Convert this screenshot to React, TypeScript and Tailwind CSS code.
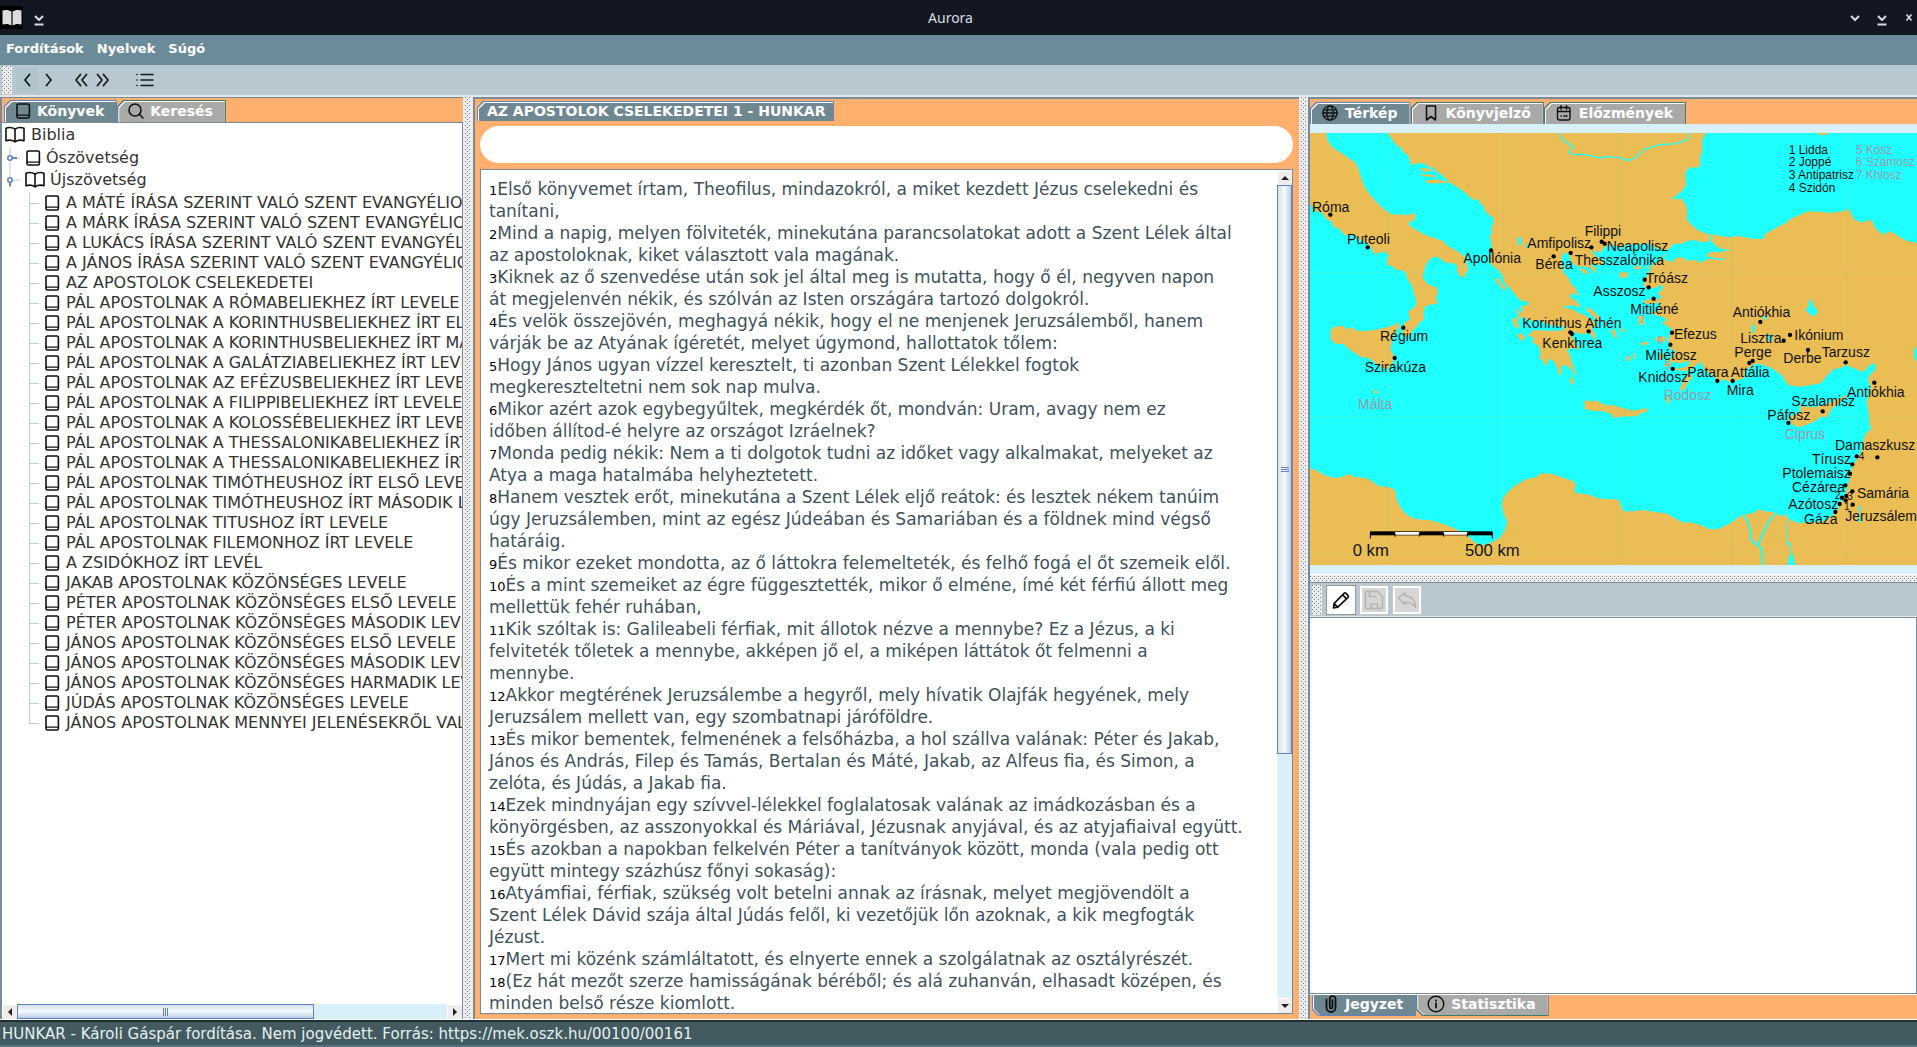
import React from "react";

/* ---------- icons ---------- */
type IconProps = { className?: string };
const base = {
  fill: "none",
  stroke: "currentColor",
  strokeWidth: 1.6,
  strokeLinecap: "round" as const,
  strokeLinejoin: "round" as const,
};

const Book = ({ className = "h-4 w-4" }: IconProps) => (
  <svg viewBox="0 0 16 16" className={className} {...base} aria-hidden="true">
    <rect x="2" y="1" width="12.4" height="14" rx="1.4" />
    <path d="M2 12.2h12.4" strokeWidth="1.2" />
  </svg>
);
const OpenBook = ({ className = "h-[18px] w-5" }: IconProps) => (
  <svg viewBox="0 0 20 18" className={className} {...base} aria-hidden="true">
    <path d="M1 2.2C4 1.2 7.500 1.600 10 3c2.500-1.400 6-1.800 9-.8v12.600c-3-1-6.500-.6-9 .9-2.500-1.500-6-1.900-9-.9z" />
    <path d="M10 3v12.500" />
  </svg>
);
const Search = () => (
  <svg viewBox="0 0 16 16" className="h-4 w-4" {...base} aria-hidden="true">
    <circle cx="7" cy="7" r="6" />
    <path d="M11.300 11.300 15 15" />
  </svg>
);
const Globe = () => (
  <svg viewBox="0 0 16 16" className="h-4 w-[18px]" {...base} strokeWidth="1.3" aria-hidden="true">
    <circle cx="8" cy="8" r="7.200" />
    <ellipse cx="8" cy="8" rx="3.200" ry="7.200" />
    <path d="M1 8h14M2.200 4.800h11.600M2.200 11.200h11.600" />
  </svg>
);
const Bookmark = () => (
  <svg viewBox="0 0 16 16" className="h-4 w-[18px]" {...base} aria-hidden="true">
    <path d="M3.500 1h9v14L8 11.500 3.500 15z" />
  </svg>
);
const Calendar = () => (
  <svg viewBox="0 0 16 16" className="h-4 w-[18px]" {...base} strokeWidth="1.400" aria-hidden="true">
    <rect x="1.500" y="2.500" width="12.500" height="12.500" rx="2" />
    <path d="M1.500 6.500H14M5 .6v3.600M10.500 .6v3.600M5 11h.4M8 11h3" />
  </svg>
);
const Clip = () => (
  <svg viewBox="0 0 16 18" className="h-[18px] w-4" {...base} strokeWidth="1.800" aria-hidden="true">
    <path d="M3.500 4.500v8a4.500 4.500 0 0 0 9 0V4a2.800 2.800 0 0 0-5.700 0v8a1.300 1.300 0 0 0 2.600 0V5" />
  </svg>
);
const Info = () => (
  <svg viewBox="0 0 18 18" className="h-[18px] w-[18px]" {...base} strokeWidth="1.400" aria-hidden="true">
    <circle cx="9" cy="9" r="7.800" />
    <path d="M9 8.200v4.300M9 5.400v.3" strokeWidth="1.800" />
  </svg>
);
const Pencil = () => (
  <svg viewBox="0 0 20 20" className="h-5 w-5" {...base} strokeWidth="1.700" aria-hidden="true">
    <path d="M3 13.600 13 3.300q1-.9 2 0l2 2q.9 1 0 2L6.800 17.200 2.500 17.800zM11.600 4.800l4 4M3 13.600l3.800 3.600" />
  </svg>
);
const Save = () => (
  <svg viewBox="0 0 20 20" className="h-5 w-5" {...base} aria-hidden="true">
    <path d="M1.500 3q0-1.500 1.500-1.500h10.500l5 5V17q0 1.500-1.500 1.500H3Q1.500 18.500 1.500 17zM5.500 1.500v5H12M7 18.500v-4.500h6.500v4.500" />
  </svg>
);
const Undo = () => (
  <svg viewBox="0 0 20 20" className="h-5 w-5" {...base} aria-hidden="true">
    <path d="M1.500 8 8 2.500v3.300c6.500.4 10.200 4 10.500 11.700-2.300-4-5.500-5.300-10.500-5.300v2.300z" />
  </svg>
);
const Chevrons = ({ d, w }: { d: string; w: string }) => (
  <svg viewBox={w} className="h-4 w-auto" {...base} strokeWidth="1.800" aria-hidden="true">
    <path d={d} />
  </svg>
);
const List = () => (
  <svg viewBox="0 0 18 14" className="h-[14px] w-[18px]" {...base} aria-hidden="true">
    <path d="M5 1.500h12M5 7h12M5 12.500h12M1 1.500h.2M1 7h.2M1 12.500h.2" />
  </svg>
);
const WinMin = () => (
  <svg viewBox="0 0 12 12" className="h-3 w-3" {...base} strokeWidth="2" strokeLinecap="butt" aria-hidden="true">
    <path d="M2 2l4 4 4-4M1.500 10.500h9" />
  </svg>
);

/* ---------- shared parts ---------- */
const DOTS =
  "bg-[image:conic-gradient(from_270deg_at_1px_1px,#6f7d8a_90deg,transparent_0),conic-gradient(from_270deg_at_1px_1px,#6f7d8a_90deg,transparent_0)] bg-[size:4px_4px] bg-[position:0_0,2px_2px]";

function Tab({
  icon,
  label,
  active = false,
  bottom = false,
}: {
  icon?: React.ReactNode;
  label: string;
  active?: boolean;
  bottom?: boolean;
}) {
  const clip = bottom
    ? "[clip-path:polygon(0_0,100%_0,100%_100%,6px_100%,0_calc(100%-6px))]"
    : "[clip-path:polygon(6px_0,100%_0,100%_100%,0_100%,0_6px)]";
  return (
    <button
      type="button"
      role="tab"
      aria-selected={active}
      className={`flex ${clip} ${bottom ? "px-px pb-px" : "px-px pt-px"} ${active ? "bg-[#6382bf]" : "bg-[#3f7a70]"}`}
    >
      <span className={`flex ${clip} ${bottom ? "pl-px" : "pl-px pt-px"} bg-white`}>
        <span
          className={`flex items-center gap-1.5 ${clip} ${icon ? "h-5 pl-[9px] pr-3" : "h-[18px] px-2"} ${active ? "bg-[#6f8791]" : "bg-[#a9aaa8]"} pb-0.5 text-sm leading-4 font-bold text-white`}
        >
          {icon && <span className="text-[#111]">{icon}</span>}
          {label}
        </span>
      </span>
    </button>
  );
}

const Arrow = ({ points }: { points: string }) => (
  <svg viewBox="0 0 8 8" className="h-2 w-2" aria-hidden="true">
    <polygon points={points} fill="#222" />
  </svg>
);

/* ---------- book tree ---------- */
const books = [
  "A MÁTÉ ÍRÁSA SZERINT VALÓ SZENT EVANGYÉLIOM",
  "A MÁRK ÍRÁSA SZERINT VALÓ SZENT EVANGYÉLIOM",
  "A LUKÁCS ÍRÁSA SZERINT VALÓ SZENT EVANGYÉLIOM",
  "A JÁNOS ÍRÁSA SZERINT VALÓ SZENT EVANGYÉLIOM",
  "AZ APOSTOLOK CSELEKEDETEI",
  "PÁL APOSTOLNAK A RÓMABELIEKHEZ ÍRT LEVELE",
  "PÁL APOSTOLNAK A KORINTHUSBELIEKHEZ ÍRT ELSŐ LEVELE",
  "PÁL APOSTOLNAK A KORINTHUSBELIEKHEZ ÍRT MÁSODIK LEVELE",
  "PÁL APOSTOLNAK A GALÁTZIABELIEKHEZ ÍRT LEVELE",
  "PÁL APOSTOLNAK AZ EFÉZUSBELIEKHEZ ÍRT LEVELE",
  "PÁL APOSTOLNAK A FILIPPIBELIEKHEZ ÍRT LEVELE",
  "PÁL APOSTOLNAK A KOLOSSÉBELIEKHEZ ÍRT LEVELE",
  "PÁL APOSTOLNAK A THESSALONIKABELIEKHEZ ÍRT ELSŐ LEVELE",
  "PÁL APOSTOLNAK A THESSALONIKABELIEKHEZ ÍRT MÁSODIK LEVELE",
  "PÁL APOSTOLNAK TIMÓTHEUSHOZ ÍRT ELSŐ LEVELE",
  "PÁL APOSTOLNAK TIMÓTHEUSHOZ ÍRT MÁSODIK LEVELE",
  "PÁL APOSTOLNAK TITUSHOZ ÍRT LEVELE",
  "PÁL APOSTOLNAK FILEMONHOZ ÍRT LEVELE",
  "A ZSIDÓKHOZ ÍRT LEVÉL",
  "JAKAB APOSTOLNAK KÖZÖNSÉGES LEVELE",
  "PÉTER APOSTOLNAK KÖZÖNSÉGES ELSŐ LEVELE",
  "PÉTER APOSTOLNAK KÖZÖNSÉGES MÁSODIK LEVELE",
  "JÁNOS APOSTOLNAK KÖZÖNSÉGES ELSŐ LEVELE",
  "JÁNOS APOSTOLNAK KÖZÖNSÉGES MÁSODIK LEVELE",
  "JÁNOS APOSTOLNAK KÖZÖNSÉGES HARMADIK LEVELE",
  "JÚDÁS APOSTOLNAK KÖZÖNSÉGES LEVELE",
  "JÁNOS APOSTOLNAK MENNYEI JELENÉSEKRŐL VALÓ KÖNYVE",
];

function Handle({ open }: { open: boolean }) {
  return (
    <svg viewBox="0 0 18 22" className="h-[22px] w-[18px]" fill="none" aria-hidden="true">
      <path d={open ? "M8 0v8M11 11h7" : "M8 0v22M11 11h7"} stroke="#b8cfe5" />
      <circle cx="8" cy="11" r="2.200" stroke="#6382bf" strokeWidth="1.600" fill="#fff" />
      <path d={open ? "M8 13v4.500" : "M10 11h5"} stroke="#6382bf" strokeWidth="2" />
    </svg>
  );
}

function BookTree() {
  return (
    <div className="min-h-0 flex-1 overflow-hidden whitespace-nowrap text-base leading-5 text-[#333]">
      <div className="flex h-6 items-center gap-1.5 pl-[3px]">
        <span className="text-[#111]"><OpenBook /></span>
        Biblia
      </div>
      <div className="flex h-[22px] items-center">
        <Handle open={false} />
        <span className="pl-[5px] pr-[5px] text-[#111]"><Book /></span>
        Ószövetség
      </div>
      <div className="flex h-[22px] items-center">
        <Handle open />
        <span className="pl-[5px] pr-[5px] text-[#111]"><OpenBook /></span>
        Újszövetség
      </div>
      <ul className="pt-0.5">
        {books.map((b, i) => (
          <li key={i} className="flex h-5 items-center">
            <span
              className={`ml-[27px] flex w-[10px] shrink-0 flex-col self-stretch ${
                i === books.length - 1 ? "" : "border-l border-[#b8cfe5]"
              }`}
            >
              <span
                className={`h-[11px] border-b border-[#b8cfe5] ${i === books.length - 1 ? "border-l" : ""}`}
              />
            </span>
            <span className="pl-[5px] pr-1.5 text-[#111]"><Book /></span>
            {b}
          </li>
        ))}
      </ul>
    </div>
  );
}

/* ---------- chapter text ---------- */
const verses: string[][] = [
  ["Első könyvemet írtam, Theofilus, mindazokról, a miket kezdett Jézus cselekedni és", "tanítani,"],
  ["Mind a napig, melyen fölviteték, minekutána parancsolatokat adott a Szent Lélek által", "az apostoloknak, kiket választott vala magának."],
  ["Kiknek az ő szenvedése után sok jel által meg is mutatta, hogy ő él, negyven napon", "át megjelenvén nékik, és szólván az Isten országára tartozó dolgokról."],
  ["És velök összejövén, meghagyá nékik, hogy el ne menjenek Jeruzsálemből, hanem", "várják be az Atyának ígéretét, melyet úgymond, hallottatok tőlem:"],
  ["Hogy János ugyan vízzel keresztelt, ti azonban Szent Lélekkel fogtok", "megkereszteltetni nem sok nap mulva."],
  ["Mikor azért azok egybegyűltek, megkérdék őt, mondván: Uram, avagy nem ez", "időben állítod-é helyre az országot Izráelnek?"],
  ["Monda pedig nékik: Nem a ti dolgotok tudni az időket vagy alkalmakat, melyeket az", "Atya a maga hatalmába helyheztetett."],
  ["Hanem vesztek erőt, minekutána a Szent Lélek eljő reátok: és lesztek nékem tanúim", "úgy Jeruzsálemben, mint az egész Júdeában és Samariában és a földnek mind végső", "határáig."],
  ["És mikor ezeket mondotta, az ő láttokra felemelteték, és felhő fogá el őt szemeik elől."],
  ["És a mint szemeiket az égre függesztették, mikor ő elméne, ímé két férfiú állott meg", "mellettük fehér ruhában,"],
  ["Kik szóltak is: Galileabeli férfiak, mit állotok nézve a mennybe? Ez a Jézus, a ki", "felviteték tőletek a mennybe, akképen jő el, a miképen láttátok őt felmenni a", "mennybe."],
  ["Akkor megtérének Jeruzsálembe a hegyről, mely hívatik Olajfák hegyének, mely", "Jeruzsálem mellett van, egy szombatnapi járóföldre."],
  ["És mikor bementek, felmenének a felsőházba, a hol szállva valának: Péter és Jakab,", "János és András, Filep és Tamás, Bertalan és Máté, Jakab, az Alfeus fia, és Simon, a", "zelóta, és Júdás, a Jakab fia."],
  ["Ezek mindnyájan egy szívvel-lélekkel foglalatosak valának az imádkozásban és a", "könyörgésben, az asszonyokkal és Máriával, Jézusnak anyjával, és az atyjafiaival együtt."],
  ["És azokban a napokban felkelvén Péter a tanítványok között, monda (vala pedig ott", "együtt mintegy százhúsz főnyi sokaság):"],
  ["Atyámfiai, férfiak, szükség volt betelni annak az írásnak, melyet megjövendölt a", "Szent Lélek Dávid szája által Júdás felől, ki vezetőjük lőn azoknak, a kik megfogták", "Jézust."],
  ["Mert mi közénk számláltatott, és elnyerte ennek a szolgálatnak az osztályrészét."],
  ["(Ez hát mezőt szerze hamisságának béréből; és alá zuhanván, elhasadt középen, és", "minden belső része kiomlott."],
];

/* ---------- map ---------- */
const LAND = "#eabd55";
const SEA = "#1effff";

const cityLabels: [string, number, number][] = [
  ["Róma", 36, 275], ["Puteoli", 141, 371], ["Apollónia", 490, 430], ["Amfipolisz", 682, 385],
  ["Filippi", 854, 347], ["Neapolisz", 920, 393], ["Bérea", 706, 448], ["Thesszalónika", 824, 434],
  ["Tróász", 1037, 488], ["Asszosz", 880, 528], ["Mitiléné", 991, 581], ["Korinthus", 667, 625],
  ["Athén", 855, 625], ["Kenkhrea", 727, 685], ["Régium", 240, 664], ["Szirakúza", 194, 755],
  ["Efezus", 1122, 656], ["Antiókhia", 1298, 590], ["Lisztra", 1321, 668], ["Ikónium", 1483, 660],
  ["Milétosz", 1036, 720], ["Perge", 1303, 712], ["Derbe", 1450, 729], ["Tarzusz", 1565, 711],
  ["Knidosz", 1015, 785], ["Patara", 1162, 772], ["Attália", 1292, 772], ["Mira", 1280, 824],
  ["Antiókhia", 1641, 831], ["Szalamisz", 1474, 857], ["Páfosz", 1402, 899], ["Damaszkusz", 1605, 991],
  ["Tírusz", 1536, 1032], ["Ptolemaisz", 1447, 1074], ["Cézárea", 1476, 1115], ["Samária", 1671, 1133],
  ["Azótosz", 1465, 1167], ["Gáza", 1512, 1212], ["Jeruzsálem", 1636, 1203],
];
const islandLabels: [string, number, number][] = [
  ["Málta", 174, 866], ["Rodosz", 1091, 839], ["Ciprus", 1454, 957],
];
const cityDots: [number, number][] = [
  [91, 284], [203, 382], [573, 391], [761, 409], [812, 399], [874, 382], [905, 365], [914, 371],
  [310, 623], [284, 714], [811, 637], [816, 642], [866, 634], [1034, 479], [1046, 502], [1061, 536],
  [1381, 606], [1451, 662], [1470, 645], [1116, 638], [1111, 674], [1118, 747], [1252, 783], [1298, 783],
  [1348, 729], [1358, 723], [1524, 690], [1637, 727], [1723, 788], [1568, 874], [1465, 909], [1670, 1009],
  [1732, 1012], [1657, 1033], [1650, 1061], [1636, 1096], [1657, 1114], [1626, 1133], [1639, 1128],
  [1637, 1141], [1619, 1152], [1658, 1154], [1606, 1176],
];

function MapView() {
  return (
    <svg
      viewBox="30 39 1821 1296"
      className="block w-full font-['Liberation_Sans',Arial,sans-serif]"
      role="img"
      aria-label="Térkép"
    >
      <rect x="30" y="39" width="1821" height="1296" fill={SEA} />
      <g fill={LAND}>
        {/* Italy */}
        <path d="M30 39H78L82 58 90 72 102 86 125 99 145 114 165 126 173 140 180 162 188 186 196 206 212 226 230 246 250 266 270 280 285 285 300 283 322 286 338 279 346 284 345 298 335 305 327 303 327 316 345 328 375 344 402 354 430 363 440 375 456 385 475 395 497 412 500 428 505 450 497 458 495 472 480 468 470 452 474 440 462 430 440 429 415 412 400 410 388 420 378 434 372 452 368 472 380 490 395 498 410 502 414 516 408 532 413 551 396 552 374 561 370 580 373 598 360 606 352 618 340 628 332 645 316 650 306 640 312 610 330 598 324 575 345 560 350 545 342 520 335 495 322 478 317 458 305 450 288 450 280 440 262 434 260 420 266 405 250 394 235 400 222 402 214 384 202 370 180 360 165 348 150 344 134 346 118 326 102 322 94 305 78 296 66 278 45 274 30 250Z" />
        {/* Sicily and Malta */}
        <path d="M92 630 104 620 130 617 138 628 155 622 170 632 200 633 235 628 262 622 300 608 296 625 285 640 276 660 272 690 284 710 276 735 262 748 246 742 225 728 205 714 180 710 166 700 150 690 130 672 108 672 92 658Z" />
        <path d="M218 806 224 811 234 814 235 820 226 821Z" />
        {/* Balkans, Anatolia, Levant and Africa */}
        <path d="M262 39 276 58 286 72 300 82 310 96 324 106 330 122 334 136 350 130 375 131 385 140 400 144 412 156 430 168 446 186 460 194 480 206 495 218 505 228 520 240 535 238 540 250 552 262 556 276 572 288 581 294 580 312 574 322 576 338 569 350 574 366 576 395 568 418 572 432 585 442 600 455 608 470 612 488 622 496 636 512 648 528 660 540 686 546 684 555 664 558 668 574 656 580 650 610 664 590 690 602 715 600 740 612 765 616 800 622 780 632 740 632 700 630 684 646 700 654 698 668 716 678 722 696 718 716 728 720 735 738 744 728 746 716 762 724 772 744 776 766 784 762 784 742 792 734 806 740 818 752 824 768 828 762 816 728 810 706 800 690 818 684 838 688 826 668 815 650 822 636 842 642 868 640 878 652 888 660 884 640 874 622 890 618 878 600 855 586 836 578 822 570 786 560 815 556 842 562 832 545 806 528 822 520 836 530 828 506 812 490 806 474 790 458 788 440 784 415 790 400 806 400 812 420 824 436 846 440 870 442 884 460 888 444 870 432 905 436 912 425 888 408 876 396 892 392 898 402 914 380 940 374 962 384 985 372 1010 374 1044 370 1060 380 1095 392 1120 378 1110 398 1080 410 1062 432 1040 440 1050 452 1040 470 1030 500 1060 505 1090 494 1084 512 1072 520 1086 532 1062 540 1082 552 1074 574 1050 580 1090 592 1102 600 1086 608 1116 628 1104 660 1112 690 1128 692 1120 708 1100 722 1140 730 1172 722 1160 740 1130 746 1100 748 1150 752 1170 752 1184 738 1204 726 1212 748 1240 768 1256 784 1274 778 1292 788 1318 778 1332 776 1336 752 1352 740 1372 730 1400 738 1420 748 1448 768 1455 782 1466 796 1500 800 1530 796 1562 790 1580 768 1600 748 1622 744 1640 735 1660 744 1690 756 1704 740 1720 728 1728 740 1724 752 1706 768 1704 784 1712 800 1706 824 1700 846 1706 880 1708 908 1713 926 1696 942 1690 962 1686 990 1676 1010 1666 1024 1654 1050 1648 1080 1640 1110 1626 1140 1612 1168 1600 1184 1580 1200 1560 1206 1530 1206 1500 1210 1470 1200 1455 1184 1440 1188 1425 1176 1404 1176 1376 1168 1362 1178 1324 1186 1300 1204 1270 1220 1250 1228 1226 1227 1206 1216 1190 1212 1170 1206 1150 1208 1124 1194 1098 1180 1064 1176 1030 1170 998 1174 970 1174 964 1160 958 1142 944 1137 920 1138 890 1134 870 1124 830 1120 822 1108 828 1096 820 1084 792 1074 776 1068 758 1062 724 1060 708 1072 682 1076 660 1088 640 1100 620 1120 607 1138 605 1156 610 1178 622 1206 614 1232 598 1254 578 1266 550 1275 525 1268 508 1252 484 1236 456 1222 430 1212 392 1201 350 1198 326 1188 308 1172 296 1152 289 1136 287 1116 278 1104 236 1098 216 1084 204 1076 180 1072 165 1072 146 1062 128 1071 100 1073 74 1066 52 1052 30 1044V1335H1851V39Z" />
      </g>

      {/* Black Sea, Marmara and lakes */}
      <g fill={SEA}>
        <path d="M1217 39 1206 62 1207 92 1200 112 1201 138 1186 144 1168 142 1155 158 1157 176 1158 196 1146 212 1115 238 1145 236 1158 256 1162 276 1160 296 1172 312 1192 330 1222 342 1250 346 1285 352 1320 348 1340 354 1362 356 1390 358 1395 342 1410 334 1432 322 1458 308 1472 296 1500 284 1526 274 1560 275 1590 279 1630 274 1645 266 1654 282 1664 300 1684 307 1698 304 1716 300 1722 318 1734 332 1752 344 1766 334 1786 342 1800 352 1820 362 1851 369V39Z" />
        <path d="M1100 402 1110 390 1118 372 1150 370 1158 364 1180 360 1205 366 1235 364 1246 376 1262 386 1295 390 1260 396 1230 396 1218 408 1245 414 1278 416 1270 420 1226 416 1200 428 1190 420 1160 422 1150 412 1128 414 1116 426 1090 418Z" />
        <path d="M1528 535 1538 548 1542 560 1554 572 1548 584 1536 588 1516 570 1526 558Z" />
        <path d="M1356 612 1366 620 1360 640 1354 632ZM1400 640 1414 646 1418 662 1402 664ZM1390 588h10v10h-10z" />
        <path d="M653 352h11v22h-11zM680 366 684 386 676 382Z" />
        <path d="M1674 1160 1682 1158 1680 1185 1684 1208 1674 1204 1678 1185Z" />
        <path d="M1470 1301 1478 1302 1486 1335H1462L1466 1318ZM1460 1262 1470 1270 1468 1278 1460 1274Z" />
        <path d="M1842 688 1851 682V725L1842 712Z" />
      </g>
      <g fill="none" stroke={SEA} strokeWidth="5">
        <path d="M780 39 788 60 820 80 806 96 820 104 850 103 880 109 905 114 920 110 960 113 985 122 1010 110 1032 88 1080 74 1130 71 1165 58 1168 39" strokeWidth="4" />
        <path d="M1233 345 1232 366M1095 408 1060 430 1046 450" />
        <path d="M1326 1180 1342 1202 1350 1228 1354 1262 1384 1284 1388 1335M1428 1176 1402 1212 1388 1242 1376 1272" strokeWidth="6" />
        <path d="M1460 1200V1266M1470 1275 1476 1300" strokeWidth="3" />
      </g>

      {/* Islands */}
      <g fill={LAND}>
        <path d="M853 846 860 838 865 844 895 842 900 848 918 856 940 856 960 862 1000 872 1030 866 1042 864 1040 876 1022 880 1010 888 960 890 940 894 934 882 910 874 880 872 855 868Z" />
        <path d="M1465 896 1476 888 1500 878 1500 858 1540 862 1570 856 1600 844 1625 832 1648 824 1620 846 1594 868 1582 890 1560 892 1545 904 1520 914 1498 922 1480 916Z" />
        <path d="M1140 810 1146 790 1160 770 1174 760 1176 774 1162 790 1155 806 1144 814ZM1101 826 1110 840 1102 854 1098 840Z" />
        <path d="M584 476 598 476 602 490 618 500 616 512 606 504 592 490ZM636 600 648 592 652 610 660 624 644 620ZM650 645 664 640 676 652 666 664ZM650 562 660 572 652 584Z" />
        <path d="M810 772 820 776 821 792 815 795 810 784ZM360 144 392 146 398 154 366 154ZM362 162 404 166 412 172 366 168ZM376 182 412 178 450 188 412 190 382 190ZM272 52 290 54 306 70 290 66Z" />
        <path d="M838 444 856 448 868 462 850 460ZM958 458 984 456 980 472 962 474ZM1000 442 1022 436 1024 446 1006 448ZM860 560 880 572 900 592 898 606 880 590 862 574ZM930 628 944 630 952 656 942 650ZM1028 542 1060 536 1072 550 1040 552ZM1014 590 1030 586 1032 612 1018 616ZM1062 655 1094 648 1098 664 1076 666ZM1022 668 1046 664 1040 674 1024 674ZM1078 704 1092 700 1088 714 1080 722ZM1092 730 1114 726 1110 738 1094 740ZM960 620 976 632 970 640ZM1000 700h6v16h-6zM980 708h10v14h-10z" />
        <path d="M1550 39H1585L1576 46 1560 45Z" />
      </g>

      {/* Graticule */}
      <g stroke="#8fd58a" strokeOpacity=".22" strokeWidth="3">
        <path d="M265 39V1335M608 39V1335M957 39V1335M1297 39V1335M1643 39V1335M30 457H1851M30 890H1851M30 1297H1851" />
      </g>

      {/* Scale bar */}
      <rect x="210" y="1234" width="368" height="12" fill="#000" />
      <path d="M285 1240H358M431 1240H502" stroke="#fff" strokeWidth="8" />
      <path d="M211 1240V1256M285 1240V1250M358 1240V1250M431 1240V1250M502 1240V1250M577 1240V1256" stroke="#000" strokeWidth="3" />
      <g fill="#111" fontSize="50">
        <text x="158" y="1308">0 km</text>
        <text x="495" y="1308">500 km</text>
      </g>

      <g fill="#111" fontSize="42">
        {cityLabels.map(([t, x, y]) => (
          <text key={`${t}${x}`} x={x} y={y}>{t}</text>
        ))}
      </g>
      <g fill="#999ba6" fontSize="42">
        {islandLabels.map(([t, x, y]) => (
          <text key={t} x={x} y={y}>{t}</text>
        ))}
      </g>
      <g fill="#111" fontSize="36">
        <text x="1466" y="101">1 Lidda</text>
        <text x="1466" y="139">2 Joppé</text>
        <text x="1466" y="176">3 Antipatrisz</text>
        <text x="1466" y="215">4 Szidón</text>
      </g>
      <g fill="#999ba6" fontSize="36">
        <text x="1667" y="101">5 Kósz</text>
        <text x="1667" y="139">6 Számosz</text>
        <text x="1667" y="176">7 Khiosz</text>
        <text x="1017" y="610" fontSize="30">7</text>
        <text x="1072" y="671" fontSize="30">6</text>
        <text x="1095" y="748" fontSize="30">5</text>
      </g>
      <g fill="#111" fontSize="30">
        <text x="1604" y="1138">2</text>
        <text x="1642" y="1140">3</text>
        <text x="1676" y="1020">4</text>
        <text x="1632" y="1169">1</text>
      </g>
      <g fill="#000">
        {cityDots.map(([x, y], i) => (
          <circle key={i} cx={x} cy={y} r="6.500" />
        ))}
      </g>
    </svg>
  );
}

/* ---------- page ---------- */
const navBtn = "flex h-6 w-[22px] items-center justify-center";
const scrollBtn = "flex h-[15px] w-[15px] shrink-0 items-center justify-center border-l border-t border-white bg-[#ededed]";

export default function App() {
  return (
    <div className="flex h-screen flex-col overflow-hidden bg-[#ededed] font-['DejaVu_Sans',Verdana,sans-serif] text-[#333]">
      {/* Title bar */}
      <header className="grid h-[35px] shrink-0 grid-cols-[1fr_auto_1fr] items-center bg-[#131722] text-[#d8dbe4]">
        <div className="flex items-center gap-2.5">
          <span className="flex h-[23px] w-[23px] items-center justify-center bg-black">
            <svg viewBox="0 0 20 18" className="h-[18px] w-5" aria-hidden="true">
              <path d="M.5 1.500C4 .5 7 1 9.400 2.500v14C7 15 4 14.500.5 15.500zM19.500 1.500C16 .5 13 1 10.600 2.500v14c2.400-1.500 5.400-2 8.900-1z" fill="#dcdedd" />
            </svg>
          </span>
          <button type="button" aria-label="Tálcára" className="pt-1"><WinMin /></button>
        </div>
        <h1 className="pr-4 font-['Noto_Sans',sans-serif] text-sm leading-5">Aurora</h1>
        <div className="flex items-center justify-end gap-[15px] pr-0.5">
          <button type="button" aria-label="Kis méret">
            <svg viewBox="0 0 12 12" className="h-3 w-3" fill="none" stroke="currentColor" strokeWidth="2" aria-hidden="true"><path d="M2 4l4 4 4-4" /></svg>
          </button>
          <button type="button" aria-label="Görgetés" className="pt-1"><WinMin /></button>
          <button type="button" aria-label="Bezárás">
            <svg viewBox="0 0 12 12" className="h-3 w-3" fill="none" stroke="currentColor" strokeWidth="1.600" aria-hidden="true"><path d="M3.500 2.500l5 6M8.500 2.500l-5 6" /></svg>
          </button>
        </div>
      </header>

      {/* Menu bar */}
      <nav className="flex h-[30px] shrink-0 items-center gap-[13px] bg-[#6c8b98] px-1.5 pb-0.5 text-[13px] font-bold leading-4 text-white">
        <button type="button">Fordítások</button>
        <button type="button">Nyelvek</button>
        <button type="button">Súgó</button>
      </nav>

      {/* Toolbar */}
      <div role="toolbar" className="flex h-[30px] shrink-0 items-center bg-[#b7c8d1] pl-0.5 text-[#1a1a1a]">
        <span className={`h-7 w-2.5 bg-[#ededed] ${DOTS}`} />
        <div className="flex pl-1">
          <button type="button" aria-label="Előző fejezet" className={`${navBtn} bg-[#b0c4cb]`}><Chevrons w="0 0 8 16" d="M6.500 2.500 2 8l4.500 5.500" /></button>
          <button type="button" aria-label="Következő fejezet" className={navBtn}><Chevrons w="0 0 8 16" d="M1.500 2.500 6 8l-4.500 5.500" /></button>
        </div>
        <div className="flex pl-2.5">
          <button type="button" aria-label="Előző könyv" className={navBtn}><Chevrons w="0 0 14 16" d="M6.500 2.500 2 8l4.500 5.500M12.500 2.500 8 8l4.500 5.500" /></button>
          <button type="button" aria-label="Következő könyv" className={navBtn}><Chevrons w="0 0 14 16" d="M1.500 2.500 6 8l-4.500 5.500M7.500 2.500 12 8l-4.500 5.500" /></button>
        </div>
        <div className="flex pl-5">
          <button type="button" aria-label="Lista" className={navBtn}><List /></button>
        </div>
      </div>
      <div className="h-0.5 shrink-0 bg-[#e4e6e8]" />

      <main className="grid min-h-0 flex-1 grid-cols-[minmax(0,463fr)_10px_minmax(0,826fr)_9px_minmax(0,609fr)]">
        {/* Books */}
        <section className="flex min-h-0 flex-col border-l-2 border-t border-[#7a8a99] bg-[#ffaf6e]">
          <div role="tablist" className="flex shrink-0 pl-0.5 pt-0.5">
            <Tab active icon={<Book />} label="Könyvek" />
            <Tab icon={<Search />} label="Keresés" />
          </div>
          <div className="flex min-h-0 flex-1 flex-col border-b border-r border-t border-[#7a8a99] bg-white">
            <BookTree />
            <div className="flex h-[15px] shrink-0 bg-[#d9effa]">
              <button type="button" aria-label="Balra" className={scrollBtn}><Arrow points="6,0 6,8 2,4" /></button>
              <div className="flex flex-1">
                <div className="flex w-[69%] items-center justify-center gap-px border border-[#6382bf] bg-gradient-to-b from-[#d5e1ee] via-[#f6f9fc] to-[#b8cfe5]">
                  <i className="h-2 w-px bg-[#6382bf]" /><i className="h-2 w-px bg-[#6382bf]" /><i className="h-2 w-px bg-[#6382bf]" />
                </div>
              </div>
              <button type="button" aria-label="Jobbra" className={scrollBtn}><Arrow points="2,0 2,8 6,4" /></button>
            </div>
          </div>
        </section>

        <div className="flex justify-center bg-[#ededed]"><span className={`w-1.5 ${DOTS}`} /></div>

        {/* Chapter */}
        <section className="flex min-h-0 flex-col border-l-2 border-t-2 border-[#7a8a99] bg-[#ffaf6e] pb-1.5 pl-[5px] pr-1.5">
          <div role="tablist" className="-ml-[3px] flex shrink-0 pt-0.5">
            <Tab active label="AZ APOSTOLOK CSELEKEDETEI 1 - HUNKAR" />
          </div>
          <input aria-label="Keresés a szövegben" className="mt-[5px] h-[37px] w-full shrink-0 rounded-full bg-white px-4 text-base outline-none" />
          <div className="mt-1.5 flex min-h-0 flex-1 border border-[#7a8a99] bg-white">
            <article className="min-w-0 flex-1 overflow-hidden whitespace-nowrap pl-2 pt-2 text-[17px] leading-[22px] text-[#3d525c]">
              {verses.map((lines, i) => (
                <p key={i}>
                  <span className="text-[13px] leading-none text-black">{i + 1}</span>
                  {lines.map((l, j) => (
                    <React.Fragment key={j}>
                      {j > 0 && <br />}
                      {l}
                    </React.Fragment>
                  ))}
                </p>
              ))}
            </article>
            <div className="flex w-[15px] shrink-0 flex-col bg-[#d9effa]">
              <button type="button" aria-label="Fel" className={scrollBtn}><Arrow points="0,6 8,6 4,2" /></button>
              <div className="min-h-0 flex-1">
                <div className="flex h-[70%] flex-col items-center justify-center gap-px border border-[#6382bf] bg-gradient-to-r from-[#d5e1ee] via-[#f6f9fc] to-[#b8cfe5]">
                  <i className="h-px w-2 bg-[#6382bf]" /><i className="h-px w-2 bg-[#6382bf]" /><i className="h-px w-2 bg-[#6382bf]" />
                </div>
              </div>
              <button type="button" aria-label="Le" className={scrollBtn}><Arrow points="0,2 8,2 4,6" /></button>
            </div>
          </div>
        </section>

        <div className="flex justify-center bg-[#ededed]"><span className={`w-1.5 ${DOTS}`} /></div>

        {/* Map and notes */}
        <section className="flex min-h-0 flex-col border-l-2 border-t-2 border-[#7a8a99] bg-[#ffaf6e]">
          <div role="tablist" className="flex shrink-0 pt-[3px]">
            <Tab active icon={<Globe />} label="Térkép" />
            <Tab icon={<Bookmark />} label="Könyvjelző" />
            <Tab icon={<Calendar />} label="Előzmények" />
          </div>
          <div className="shrink-0 bg-[#d9effa] py-[9px]"><MapView /></div>
          <div className="flex h-2 shrink-0 items-center border-t border-white bg-[#ededed]"><span className={`h-1.5 w-full ${DOTS}`} /></div>
          <div role="toolbar" className="flex h-9 shrink-0 items-center gap-[3px] border-b border-t border-[#7a8a99] bg-[#b7c8d1] pl-0.5 shadow-[inset_0_-1px_0_#e4e6e8]">
            <span className={`mr-px h-[30px] w-2.5 bg-[#ededed] ${DOTS}`} />
            <button type="button" aria-label="Szerkesztés" className="flex h-[30px] w-[30px] items-center justify-center border border-[#999] bg-white text-[#111]"><Pencil /></button>
            <button type="button" disabled aria-label="Mentés" className="flex h-[30px] w-[30px] items-center justify-center border border-[#c4c8ca] bg-[#d6d6d6] text-[#b5b5b5] shadow-[inset_0_0_0_2px_#fff]"><Save /></button>
            <button type="button" disabled aria-label="Visszavonás" className="flex h-[30px] w-[30px] items-center justify-center border border-[#c4c8ca] bg-[#d6d6d6] text-[#b5b5b5] shadow-[inset_0_0_0_2px_#fff]"><Undo /></button>
          </div>
          <textarea aria-label="Jegyzet" className="block min-h-0 w-full flex-1 resize-none border border-l-0 border-t-0 border-[#7a8a99] bg-white p-1 outline-none" />
          <div role="tablist" className="flex shrink-0 border-t border-white pb-1 pl-0.5">
            <Tab active bottom icon={<Clip />} label="Jegyzet" />
            <Tab bottom icon={<Info />} label="Statisztika" />
          </div>
        </section>
      </main>

      {/* Status bar */}
      <footer className="flex h-[27px] shrink-0 items-center border-b-2 border-t-2 border-b-[#55707a] border-t-[#1f2e33] bg-[#435a61] pl-0.5 text-[15px] leading-5 text-[#e4f0ee] shadow-[0_-1px_0_#fff]">
        HUNKAR - Károli Gáspár fordítása. Nem jogvédett. Forrás: https://mek.oszk.hu/00100/00161
      </footer>
    </div>
  );
}
